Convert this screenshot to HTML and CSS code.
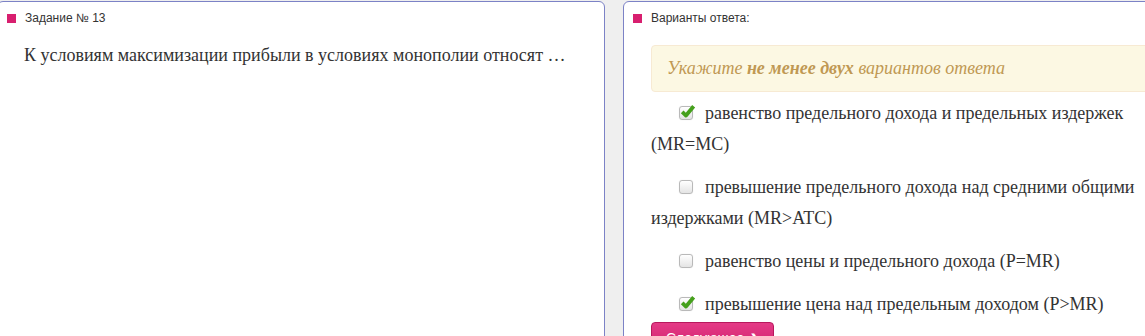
FILE: index.html
```html
<!DOCTYPE html>
<html lang="ru">
<head>
<meta charset="utf-8">
<link rel="stylesheet" href="styles.css">
</head>
<body>
<div class="page">
  <section class="panel panel-question">
    <div class="panel-head"><span class="marker"></span><span class="head-text">Задание № 13</span></div>
    <p class="question">К условиям максимизации прибыли в условиях монополии относят …</p>
  </section>
  <section class="panel panel-answers">
    <div class="panel-head"><span class="marker"></span><span class="head-text">Варианты ответа:</span></div>
    <div class="answers">
      <div class="alert">Укажите <b>не менее двух</b> вариантов ответа</div>
      <div class="options">
        <p class="option"><span class="cb"><svg class="tick" viewBox="0 0 16 16" width="17" height="17"><path d="M3 8.4 L6.6 11.8 L13.8 3" fill="none" stroke="#45a01c" stroke-width="3.6" stroke-linejoin="round"/></svg></span>равенство предельного дохода и предельных издержек (MR=MC)</p>
        <p class="option"><span class="cb"></span>превышение предельного дохода над средними общими издержками (MR&gt;ATC)</p>
        <p class="option"><span class="cb"></span>равенство цены и предельного дохода (P=MR)</p>
        <p class="option"><span class="cb"><svg class="tick" viewBox="0 0 16 16" width="17" height="17"><path d="M3 8.4 L6.6 11.8 L13.8 3" fill="none" stroke="#45a01c" stroke-width="3.6" stroke-linejoin="round"/></svg></span>превышение цена над предельным доходом (P&gt;MR)</p>
      </div>
      <button class="btn-next">Следующее <span class="chev">❯</span></button>
    </div>
  </section>
</div>
</body>
</html>
```

FILE: styles.css
```css
html, body {
  margin: 0;
  padding: 0;
  overflow: hidden;
  height: 100%;
}
body {
  background: #efefef;
  font-family: "Liberation Serif", "Times New Roman", serif;
  color: #333;
}
.page {
  display: flex;
  gap: 18px;
  margin-left: -3px;
  padding-top: 1px;
  width: 1300px;
  align-items: flex-start;
}
.panel {
  background: #fff;
  border: 1px solid #7c82c6;
  border-radius: 6px;
  height: 400px;
  box-sizing: border-box;
}
.panel-question {
  width: 608px;
  flex: none;
}
.panel-answers {
  width: 574px;
  flex: none;
}
.panel-head {
  display: flex;
  align-items: center;
  padding: 8px 0 0 9px;
  height: 16px;
  font-family: "Liberation Sans", Arial, sans-serif;
  font-size: 12px;
  color: #333;
}
.marker {
  width: 9px;
  height: 9px;
  background: #d81f6f;
  margin-right: 9px;
}
.question {
  margin: 0;
  padding: 17px 0 0 26px;
  font-size: 18px;
  line-height: 24px;
}
.answers {
  padding: 19px 26px 0 27px;
}
.alert {
  background: #fcf8e3;
  border: 1px solid #f7ead3;
  border-radius: 4px;
  padding: 12px 15px 12px;
  font-style: italic;
  font-size: 18px;
  line-height: 21px;
  color: #c09853;
}
.alert b {
  font-weight: bold;
}
.options {
  display: flex;
  flex-direction: column;
  gap: 12px;
  margin-top: 6px;
}
.option {
  margin: 0;
  font-size: 18px;
  line-height: 31px;
  text-indent: 28px;
}
.cb {
  display: inline-block;
  position: relative;
  width: 12px;
  height: 12px;
  border: 1px solid #b9b9b9;
  border-radius: 3px;
  background: linear-gradient(#ffffff, #e4e4e4);
  box-shadow: 0 0 1px rgba(0,0,0,0.15);
  vertical-align: -1px;
  margin-right: 12px;
  text-indent: 0;
}
.tick {
  position: absolute;
  left: -1px;
  top: -4px;
}
.btn-next {
  margin-top: 2px;
  display: inline-flex;
  align-items: center;
  gap: 6px;
  background: linear-gradient(#e43a86, #cf1f6b);
  border: 1px solid #b8185d;
  border-radius: 4px;
  color: #fff;
  font-family: "Liberation Sans", Arial, sans-serif;
  font-size: 14px;
  padding: 5px 14px;
  height: 32px;
}
.chev {
  font-size: 11px;
  font-weight: bold;
}
```
